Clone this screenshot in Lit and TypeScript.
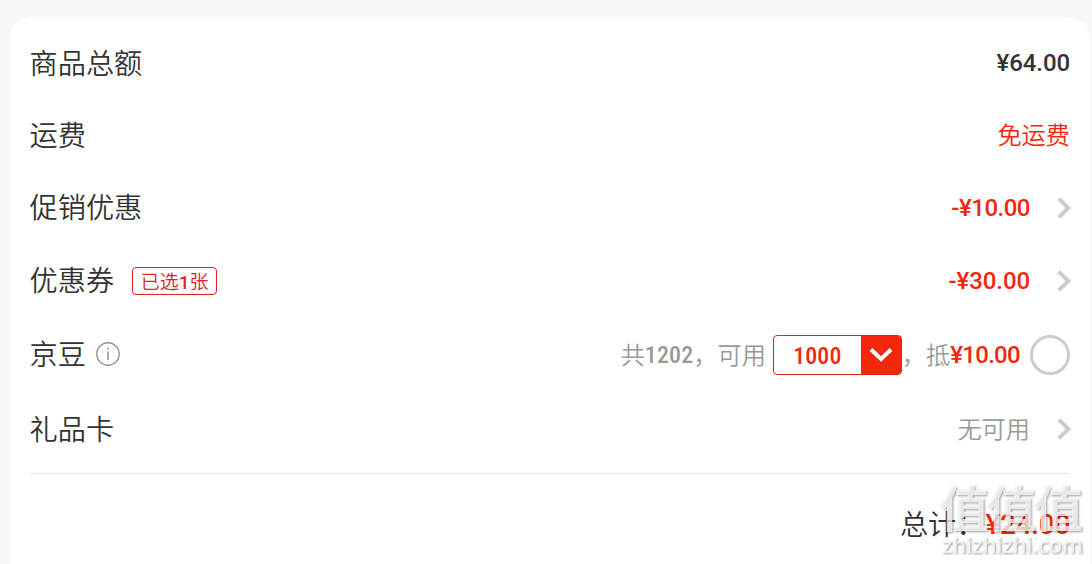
import { LitElement, html, css, svg } from 'lit';
import { customElement } from 'lit/decorators.js';

const chevron = html`
  <svg class="chevron" width="14" height="24" viewBox="0 0 14 24">
    <path d="M1.8 2.6 L11.4 12 L1.8 21.4" fill="none" stroke="#ccc" stroke-width="4" />
  </svg>
`;

@customElement('app-root')
export class OrderSummary extends LitElement {
  static styles = css`
    :host {
      display: block;
      position: relative;
      box-sizing: border-box;
      width: 100%;
      height: 564px;
      padding: 17px 2px 0 10px;
      overflow: hidden;
      background: #f7f7f7;
      color: #333;
      font-family: Roboto, 'Noto Sans CJK SC', sans-serif;
      font-size: 24px;
    }

    .card {
      box-sizing: border-box;
      height: 580px;
      padding: 10px 20px 0;
      border-radius: 22px;
      background: #fff;
    }

    .row {
      display: flex;
      align-items: center;
      height: 73px;
      line-height: 36px;
      white-space: nowrap;
    }

    .row.first { height: 71px; }
    .row.beans { height: 75px; }
    .row.gift { height: 74px; }

    .label {
      margin-left: -0.5px;
      padding-bottom: 3px;
      font-family: 'Noto Sans CJK SC DemiLight', 'Noto Sans CJK SC', sans-serif;
      font-size: 28.2px;
      font-weight: 350;
    }

    .first .label,
    .ship .label { padding-bottom: 2px; }

    .value {
      display: flex;
      align-items: center;
      margin-left: auto;
    }

    .cn {
      padding-bottom: 2px;
      font-family: 'Noto Sans CJK SC DemiLight', 'Noto Sans CJK SC', sans-serif;
      font-size: 24.2px;
      font-weight: 350;
    }

    .beans .cn { padding-bottom: 1px; }

    .num {
      font-weight: 500;
      letter-spacing: -0.1px;
    }

    .count {
      font-family: 'Roboto Condensed', Roboto, sans-serif;
      letter-spacing: 0.1px;
    }

    .off { letter-spacing: -0.5px; }
    .beans .off { margin-right: 0; letter-spacing: -0.7px; }
    .red { color: #f2270c; }
    .gray { color: #999; }

    .chevron { margin-left: 27px; margin-right: -1px; }

    .tag {
      box-sizing: border-box;
      width: 85px;
      height: 28px;
      margin-left: 18px;
      border: 1px solid #e2231a;
      border-radius: 4px;
      color: #e2231a;
      font-size: 19px;
      font-weight: 350;
      line-height: 29px;
      text-align: center;
    }

    .tag b { font-weight: 500; }
    .info { margin: 0 0 2px 10px; }

    .select {
      display: flex;
      box-sizing: border-box;
      width: 129px;
      height: 40px;
      margin: 0 0 0 7px;
      border: 1px solid #e2231a;
      border-radius: 4px;
      overflow: hidden;
      line-height: 40px;
    }

    .select .num { width: 87px; text-align: center; }

    .arrow {
      display: flex;
      flex: 1;
      align-items: center;
      justify-content: center;
      background: #f2270c;
    }

    .radio {
      box-sizing: border-box;
      width: 40px;
      height: 40px;
      margin-left: 10px;
      border: 3px solid #ccc;
      border-radius: 50%;
    }

    .total {
      display: flex;
      justify-content: flex-end;
      align-items: center;
      height: 100px;
      margin-top: 7px;
      border-top: 1px solid #e5e5e5;
      white-space: nowrap;
    }

    .total .label { margin-right: 1px; }
    .total .num { font-size: 28px; letter-spacing: -0.3px; color: #f2270c; }

    .mark {
      position: absolute;
      left: 940px;
      top: 480px;
      width: 150px;
      height: 84px;
      overflow: visible;
      filter: drop-shadow(1.5px 1.5px 0.8px rgba(0, 0, 0, 0.5));
    }

    .mark text {
      fill: #fff;
      fill-opacity: 0.75;
    }
  `;

  render() {
    return html`
      <div class="card">
        <div class="row first">
          <span class="label">商品总额</span>
          <span class="value num">¥64.00</span>
        </div>
        <div class="row ship">
          <span class="label">运费</span>
          <span class="value cn red">免运费</span>
        </div>
        <div class="row">
          <span class="label">促销优惠</span>
          <div class="value"><span class="num off red">-¥10.00</span>${chevron}</div>
        </div>
        <div class="row">
          <span class="label">优惠券</span>
          <span class="tag">已选<b>1</b>张</span>
          <div class="value"><span class="num red">-¥30.00</span>${chevron}</div>
        </div>
        <div class="row beans">
          <span class="label">京豆</span>
          <svg class="info" width="24" height="24" viewBox="0 0 24 24">
            <circle cx="12" cy="12" r="11.2" fill="none" stroke="#999" stroke-width="1.4" />
            <path d="M12 9.5 V18 M12 5.8 V7.8" stroke="#999" stroke-width="1.6" />
          </svg>
          <div class="value">
            <span class="cn gray">共</span><span class="num count gray">1202</span><span class="cn gray">，可用</span>
            <div class="select">
              <span class="num count red">1000</span>
              <div class="arrow">
                <svg width="24" height="16" viewBox="0 0 24 16">
                  <path d="M2 2.5 L12 12 L22 2.5" fill="none" stroke="#fff" stroke-width="4" />
                </svg>
              </div>
            </div>
            <span class="cn gray">，抵</span><span class="num off red">¥10.00</span>
            <span class="radio"></span>
          </div>
        </div>
        <div class="row gift">
          <span class="label">礼品卡</span>
          <div class="value"><span class="cn gray">无可用</span>${chevron}</div>
        </div>
        <div class="total">
          <span class="label">总计：</span>
          <span class="num">¥24.00</span>
        </div>
      </div>
      <svg class="mark" viewBox="0 0 150 84">
        ${svg`
          <text x="0" y="47" font-family="Noto Sans CJK SC, sans-serif" font-size="49" font-weight="700" textLength="143">值值值</text>
          <text x="2" y="73" font-family="Open Sans, sans-serif" font-size="22" font-weight="600" textLength="141">zhizhizhi.com</text>
        `}
      </svg>
    `;
  }
}
